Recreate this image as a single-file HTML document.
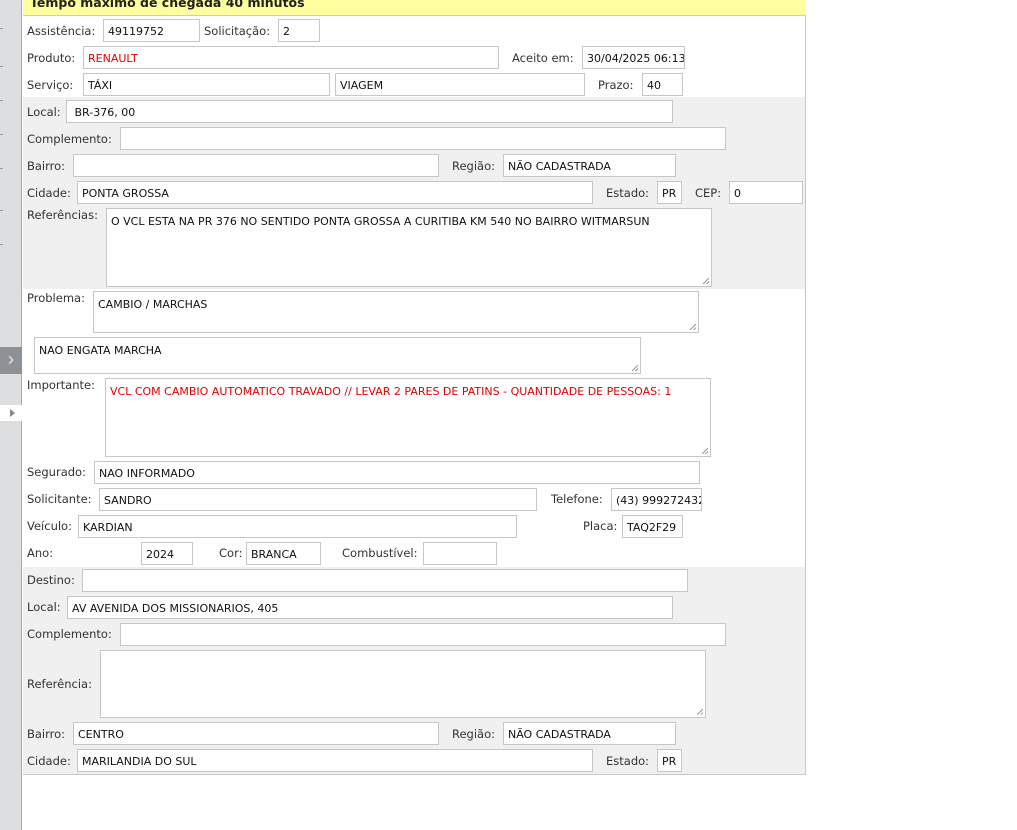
<!DOCTYPE html>
<html><head><meta charset="utf-8"><style>
*{box-sizing:border-box;margin:0;padding:0}
body{width:1017px;height:830px;background:#fff;position:relative;overflow:hidden;font-family:"DejaVu Sans","Liberation Sans",sans-serif;font-size:11.5px;color:#333}
#side{position:absolute;left:0;top:0;width:22px;height:830px;background:#dcdee0;border-right:1px solid #a9abad}
.tick{position:absolute;left:0;width:3px;height:1px;background:#9a9a9a}
#tab{position:absolute;left:0;top:347px;width:22px;height:27px;background:#8e9194;color:#dde;font-size:20px;text-align:center;line-height:25px}
#tab2{position:absolute;left:0;top:405px;width:22px;height:16px;background:#fff}
#tab2:after{content:"";position:absolute;left:10px;top:4px;border-left:5px solid #888;border-top:4px solid transparent;border-bottom:4px solid transparent}
#panel{position:absolute;left:23px;top:0;width:783px;height:775px;border-right:1px solid #c8c8c8;border-bottom:1px solid #c8c8c8;background:#fff}
#hdr{position:absolute;left:23px;top:-6px;width:783px;height:22px;background:#ffff9f;border-bottom:1px solid #d2d28a;font-weight:bold;font-size:12.5px;color:#222;padding-left:7px;line-height:18px}
.g{position:absolute;left:23px;width:782px;background:#f0f0f0}
.l{position:absolute;line-height:14px;white-space:nowrap}
.i{position:absolute;height:23px;border:1px solid #c6c6c6;background:#fff;font-size:11px;color:#111;padding:5px 0 0 4px;white-space:nowrap;overflow:hidden}
.t{position:absolute;border:1px solid #c6c6c6;background:#fff;font-size:11px;color:#111;padding:6px 0 0 4px}
.t:after{content:"";position:absolute;right:2px;bottom:2px;width:6px;height:6px;background:linear-gradient(135deg,transparent 45%,#999 45%,#999 55%,transparent 55%,transparent 75%,#999 75%,#999 85%,transparent 85%)}
.r{color:#e00000}
</style></head><body>
<div id="side">
<div class="tick" style="top:28px"></div><div class="tick" style="top:66px"></div><div class="tick" style="top:100px"></div><div class="tick" style="top:134px"></div><div class="tick" style="top:168px"></div><div class="tick" style="top:210px"></div><div class="tick" style="top:244px"></div>
</div>
<div id="tab">&#8250;</div><div id="tab2"></div>
<div id="panel"></div>
<div class="g" style="top:97px;height:192px"></div>
<div class="g" style="top:567px;height:207px"></div>
<div id="hdr">Tempo máximo de chegada 40 minutos</div>

<div class="l" style="left:27px;top:24px">Assistência:</div><div class="i" style="left:103px;top:19px;width:97px">49119752</div>
<div class="l" style="left:204px;top:24px">Solicitação:</div><div class="i" style="left:278px;top:19px;width:42px">2</div>

<div class="l" style="left:27px;top:51px">Produto:</div><div class="i r" style="left:83px;top:46px;width:416px"><span class="r">RENAULT</span></div>
<div class="l" style="left:512px;top:51px">Aceito em:</div><div class="i" style="left:582px;top:46px;width:103px">30/04/2025 06:13</div>

<div class="l" style="left:27px;top:78px">Serviço:</div><div class="i" style="left:83px;top:73px;width:247px">TÁXI</div>
<div class="i" style="left:335px;top:73px;width:250px">VIAGEM</div>
<div class="l" style="left:598px;top:78px">Prazo:</div><div class="i" style="left:642px;top:73px;width:41px">40</div>

<div class="l" style="left:27px;top:105px">Local:</div><div class="i" style="left:66px;top:100px;width:607px">&nbsp;BR-376, 00</div>
<div class="l" style="left:27px;top:132px">Complemento:</div><div class="i" style="left:120px;top:127px;width:606px"></div>
<div class="l" style="left:27px;top:159px">Bairro:</div><div class="i" style="left:73px;top:154px;width:366px"></div>
<div class="l" style="left:452px;top:159px">Região:</div><div class="i" style="left:503px;top:154px;width:173px">NÃO CADASTRADA</div>
<div class="l" style="left:27px;top:186px">Cidade:</div><div class="i" style="left:77px;top:181px;width:516px">PONTA GROSSA</div>
<div class="l" style="left:606px;top:186px">Estado:</div><div class="i" style="left:657px;top:181px;width:25px">PR</div>
<div class="l" style="left:695px;top:186px">CEP:</div><div class="i" style="left:729px;top:181px;width:74px">0</div>
<div class="l" style="left:27px;top:208px">Referências:</div><div class="t" style="left:106px;top:208px;width:606px;height:79px">O VCL ESTA NA PR 376 NO SENTIDO PONTA GROSSA A CURITIBA KM 540 NO BAIRRO WITMARSUN</div>

<div class="l" style="left:27px;top:291px">Problema:</div><div class="t" style="left:93px;top:291px;width:606px;height:42px">CAMBIO / MARCHAS</div>
<div class="t" style="left:34px;top:337px;width:607px;height:37px">NAO ENGATA MARCHA</div>
<div class="l" style="left:27px;top:378px">Importante:</div><div class="t r" style="left:105px;top:378px;width:606px;height:79px;color:#e00000">VCL COM CAMBIO AUTOMATICO TRAVADO // LEVAR 2 PARES DE PATINS - QUANTIDADE DE PESSOAS: 1</div>
<div class="l" style="left:27px;top:465px">Segurado:</div><div class="i" style="left:94px;top:461px;width:606px">NAO INFORMADO</div>
<div class="l" style="left:27px;top:492px">Solicitante:</div><div class="i" style="left:99px;top:488px;width:438px">SANDRO</div>
<div class="l" style="left:551px;top:492px">Telefone:</div><div class="i" style="left:611px;top:488px;width:91px">(43) 999272432</div>
<div class="l" style="left:27px;top:519px">Veículo:</div><div class="i" style="left:78px;top:515px;width:439px">KARDIAN</div>
<div class="l" style="left:583px;top:519px">Placa:</div><div class="i" style="left:622px;top:515px;width:61px">TAQ2F29</div>
<div class="l" style="left:27px;top:546px">Ano:</div><div class="i" style="left:141px;top:542px;width:52px">2024</div>
<div class="l" style="left:219px;top:546px">Cor:</div><div class="i" style="left:246px;top:542px;width:75px">BRANCA</div>
<div class="l" style="left:342px;top:546px">Combustível:</div><div class="i" style="left:423px;top:542px;width:74px"></div>

<div class="l" style="left:27px;top:573px">Destino:</div><div class="i" style="left:82px;top:569px;width:606px"></div>
<div class="l" style="left:27px;top:600px">Local:</div><div class="i" style="left:67px;top:596px;width:606px">AV AVENIDA DOS MISSIONARIOS, 405</div>
<div class="l" style="left:27px;top:627px">Complemento:</div><div class="i" style="left:120px;top:623px;width:606px"></div>
<div class="l" style="left:27px;top:677px">Referência:</div><div class="t" style="left:100px;top:650px;width:606px;height:68px"></div>
<div class="l" style="left:27px;top:727px">Bairro:</div><div class="i" style="left:73px;top:722px;width:366px">CENTRO</div>
<div class="l" style="left:452px;top:727px">Região:</div><div class="i" style="left:503px;top:722px;width:173px">NÃO CADASTRADA</div>
<div class="l" style="left:27px;top:754px">Cidade:</div><div class="i" style="left:77px;top:749px;width:516px">MARILANDIA DO SUL</div>
<div class="l" style="left:606px;top:754px">Estado:</div><div class="i" style="left:657px;top:749px;width:25px">PR</div>
</body></html>
